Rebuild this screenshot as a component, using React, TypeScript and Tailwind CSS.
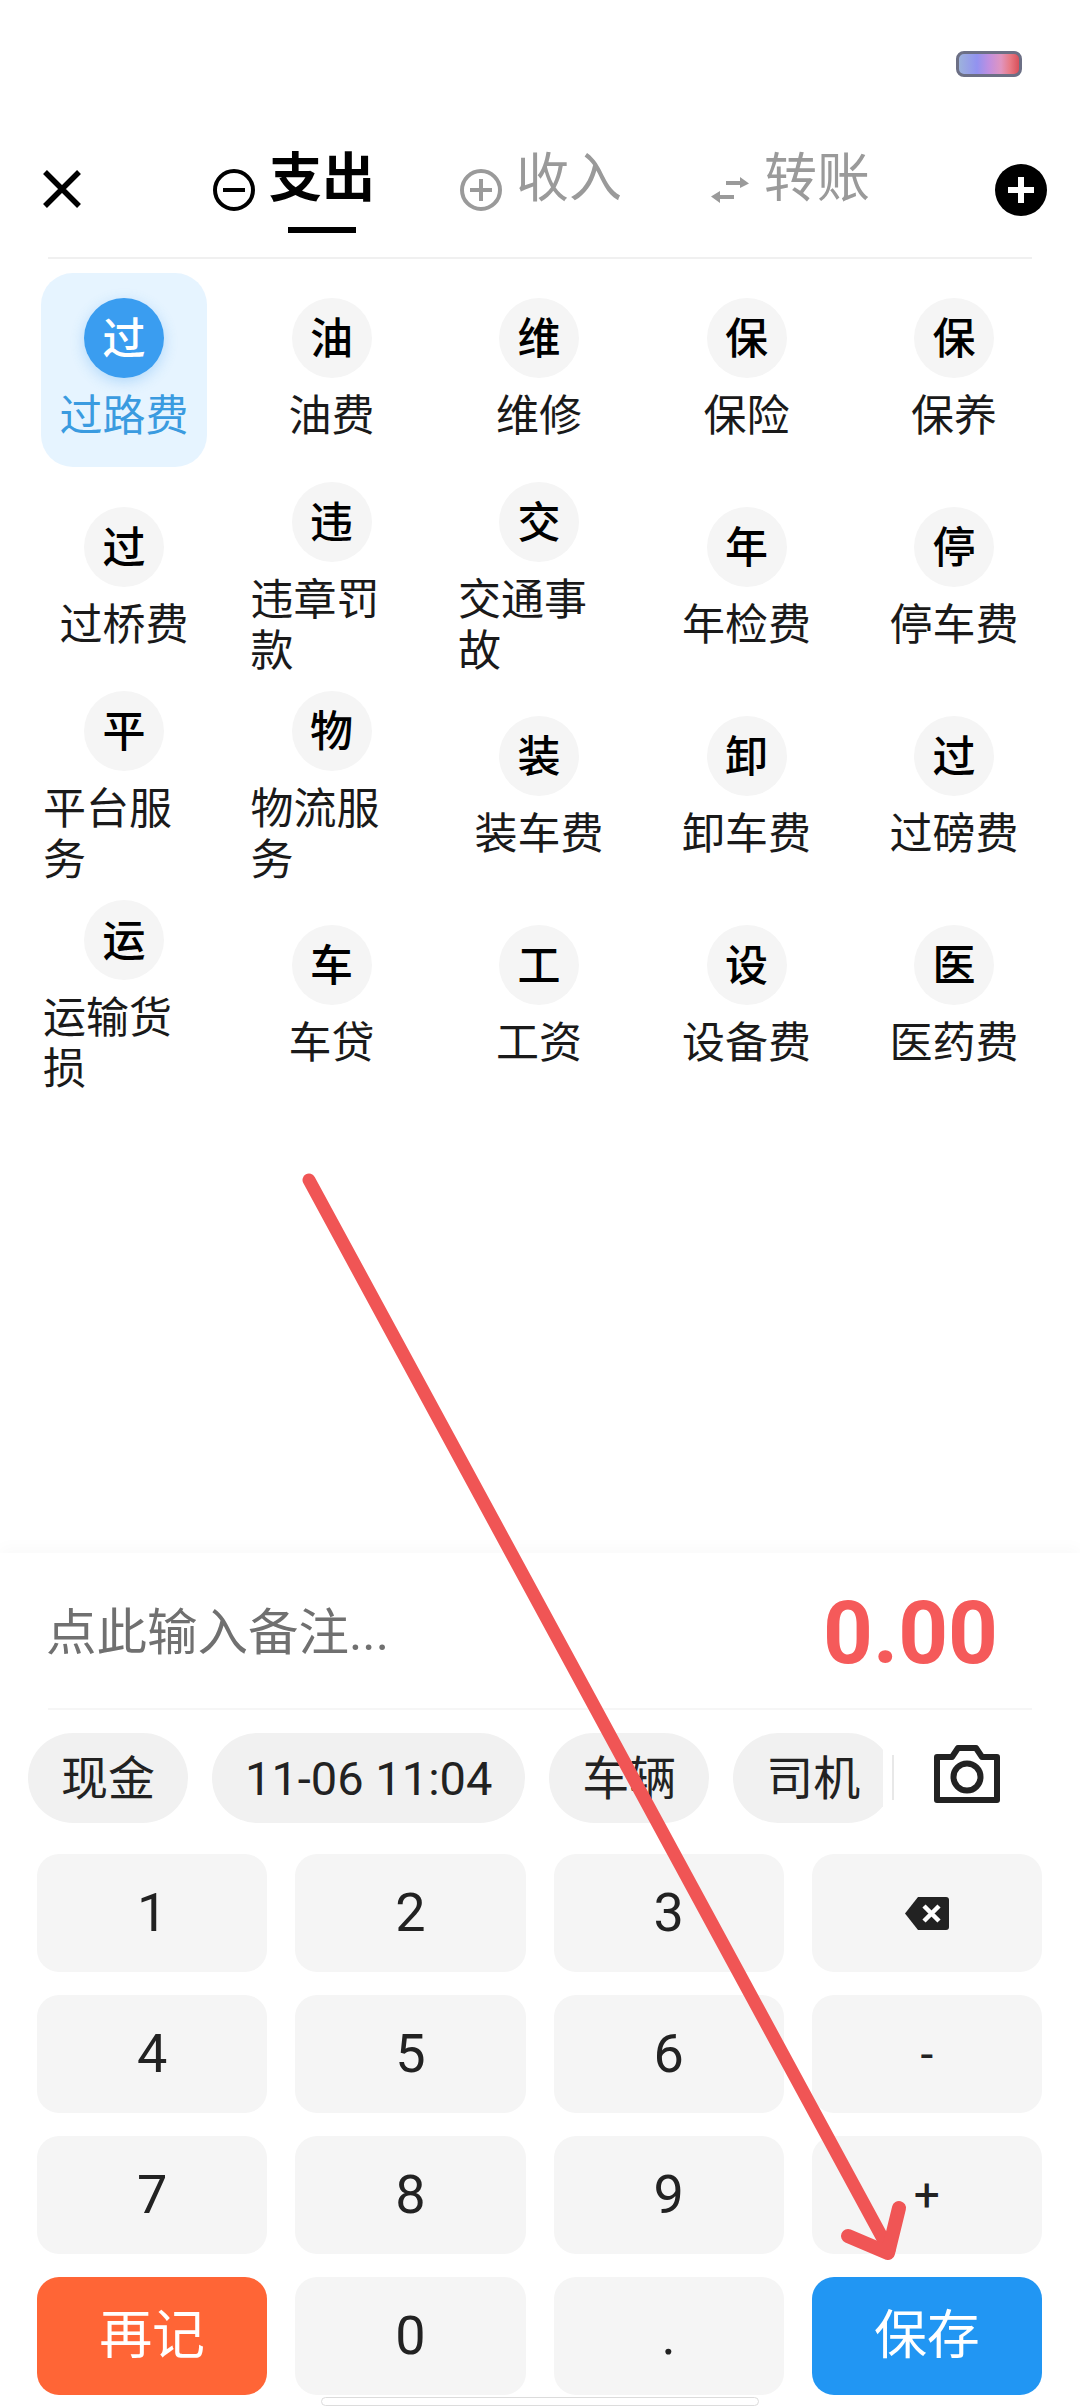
import React from "react";

const cjk = "font-['Roboto','Noto_Sans_CJK_SC',sans-serif]";

type Item = { g: string; label: string; active?: boolean };
const items: Item[] = [
  { g: "过", label: "过路费", active: true },
  { g: "油", label: "油费" },
  { g: "维", label: "维修" },
  { g: "保", label: "保险" },
  { g: "保", label: "保养" },
  { g: "过", label: "过桥费" },
  { g: "违", label: "违章罚款" },
  { g: "交", label: "交通事故" },
  { g: "年", label: "年检费" },
  { g: "停", label: "停车费" },
  { g: "平", label: "平台服务" },
  { g: "物", label: "物流服务" },
  { g: "装", label: "装车费" },
  { g: "卸", label: "卸车费" },
  { g: "过", label: "过磅费" },
  { g: "运", label: "运输货损" },
  { g: "车", label: "车贷" },
  { g: "工", label: "工资" },
  { g: "设", label: "设备费" },
  { g: "医", label: "医药费" },
];

function Category({ g, label, active }: Item) {
  return (
    <div
      className={
        "h-[194px] flex flex-col items-center justify-center rounded-[32px] " +
        (active ? "bg-[#e6f4ff]" : "")
      }
    >
      <div
        className={
          "w-[80px] h-[80px] shrink-0 rounded-full flex items-center justify-center pt-[3px] text-[43px] leading-none font-medium " +
          (active
            ? "bg-[#3a9df0] text-white shadow-[0_4px_14px_rgba(58,157,240,0.3)]"
            : "bg-[#f5f5f5] text-black")
        }
      >
        {g}
      </div>
      <div
        className={
          "mt-[13px] max-w-[162px] text-left text-[43px] leading-[51px] " +
          (active ? "text-[#3a9be0]" : "text-[#1a1a1a]")
        }
      >
        {label}
      </div>
    </div>
  );
}

function Key({ children, className }: { children: React.ReactNode; className?: string }) {
  return (
    <div
      className={
        "h-[118px] rounded-[22px] flex items-center justify-center " +
        (className ?? "bg-[#f5f5f5] text-[#222] text-[54px] leading-none")
      }
    >
      {children}
    </div>
  );
}

function Chip({ children }: { children: React.ReactNode }) {
  return (
    <div className="h-[90px] shrink-0 rounded-full bg-[#f1f1f1] px-[33px] flex items-center text-[47px] leading-none text-[#222]">
      {children}
    </div>
  );
}

export default function App() {
  return (
    <div className={"relative w-[1080px] h-[2408px] bg-white overflow-hidden flex flex-col " + cjk}>
      {/* status bar */}
      <div className="h-[150px] shrink-0 pt-[51px] pl-[956px]">
        <div className="w-[66px] h-[26px] rounded-[8px] border-[3px] border-[#6c6f85] bg-[linear-gradient(90deg,#9db2dc_0%,#9292f0_30%,#c08fe0_50%,#e095c0_70%,#e87a85_85%,#d9505a_100%)]" />
      </div>

      {/* header */}
      <div className="h-[107px] shrink-0 flex items-start pl-[43px]">
        <svg className="mt-[20px]" width="38" height="38" viewBox="0 0 38 38" fill="none" stroke="#000" strokeWidth="5.5">
          <path d="M2 2 L36 36 M36 2 L2 36" />
        </svg>

        <div className="ml-[132px] flex items-start">
          <svg className="mt-[19px]" width="42" height="42" viewBox="0 0 42 42" fill="none" stroke="#000" strokeWidth="4">
            <circle cx="21" cy="21" r="19" />
            <path d="M10 21 H32" />
          </svg>
          <div className="ml-[14px] w-[106px] flex flex-col items-center">
            <div className="text-[53px] leading-[53px] pt-[3px] font-bold text-black">支出</div>
            <div className="mt-[21px] w-[68px] h-[6px] bg-black" />
          </div>
        </div>

        <div className="ml-[85px] flex items-start">
          <svg className="mt-[19px]" width="42" height="42" viewBox="0 0 42 42" fill="none" stroke="#9a9a9a" strokeWidth="4">
            <circle cx="21" cy="21" r="19" />
            <path d="M10 21 H32 M21 10 V32" />
          </svg>
          <div className="ml-[14px] w-[106px] pt-[3px] text-[53px] leading-[53px] text-[#9a9a9a]">收入</div>
        </div>

        <div className="ml-[89px] flex items-start">
          <svg className="mt-[27px]" width="38" height="26" viewBox="0 0 38 26" fill="#9a9a9a">
            <path d="M15 4 H29 V0 L38 6.5 L29 11 V8 H15 Z" />
            <path d="M23 18 H9 V14 L0 19.5 L9 26 V22 H23 Z" />
          </svg>
          <div className="ml-[15px] w-[106px] pt-[3px] text-[53px] leading-[53px] text-[#9a9a9a]">转账</div>
        </div>

        <svg className="mt-[14px] ml-[125px]" width="52" height="52" viewBox="0 0 52 52">
          <circle cx="26" cy="26" r="26" fill="#000" />
          <path d="M13 26 H39 M26 13 V39" stroke="#fff" strokeWidth="6" />
        </svg>
      </div>
      <div className="h-[2px] shrink-0 mx-[48px] bg-[#f0f0f0]" />

      {/* categories */}
      <div className="flex-1 mt-[14px] pl-[41px] pr-[43px]">
        <div className="grid grid-cols-5 gap-x-[41.5px] gap-y-[15px]">
          {items.map((it, i) => (
            <Category key={i} {...it} />
          ))}
        </div>
      </div>

      {/* footer */}
      <div className="shrink-0 bg-white shadow-[0_-6px_14px_rgba(0,0,0,0.025)]">
        <div className="h-[155px] flex items-center justify-between pt-[5px] pl-[46px] pr-[82px]">
          <div className="text-[50.5px] leading-none text-[#707070]">点此输入备注...</div>
          <div className="text-[87px] leading-none font-bold text-[#f55a5a]">0.00</div>
        </div>
        <div className="h-[2px] mx-[48px] bg-[#f6f6f6]" />

        <div className="mt-[23px] flex items-start pl-[28px]">
          <div className="w-[855px] flex gap-[24px] overflow-hidden">
            <Chip>现金</Chip>
            <Chip>11-06 11:04</Chip>
            <Chip>车辆</Chip>
            <Chip>司机</Chip>
          </div>
          <div className="ml-[9px] mt-[22px] w-[2px] h-[45px] bg-[#e8e8e8]" />
          <svg className="ml-[40px] mt-[12px]" width="66" height="58" viewBox="0 0 66 58" fill="none" stroke="#222" strokeWidth="6" strokeLinejoin="round">
            <path d="M3 12 H18 L24 3 H42 L48 12 H63 V55 H3 Z" />
            <circle cx="33" cy="32" r="13.5" />
          </svg>
        </div>

        <div className="mt-[31px] pl-[37px] pr-[38px] grid grid-cols-4 gap-x-[28px] gap-y-[23px]">
          <Key>1</Key>
          <Key>2</Key>
          <Key>3</Key>
          <Key>
            <svg width="44" height="33" viewBox="0 0 44 33">
              <path d="M13 0 H41 Q44 0 44 3 V30 Q44 33 41 33 H13 L0 16.5 Z" fill="#222" />
              <path d="M19 9 L34 24 M34 9 L19 24" stroke="#fff" strokeWidth="4.5" />
            </svg>
          </Key>
          <Key>4</Key>
          <Key>5</Key>
          <Key>6</Key>
          <Key className="bg-[#f5f5f5] text-[#222] text-[46px] leading-none">-</Key>
          <Key>7</Key>
          <Key>8</Key>
          <Key>9</Key>
          <Key className="bg-[#f5f5f5] text-[#222] text-[46px] leading-none">+</Key>
          <Key className="bg-[#ff6536] text-white text-[53px] leading-none">再记</Key>
          <Key>0</Key>
          <Key>.</Key>
          <Key className="bg-[#2196f3] text-white text-[53px] leading-none">保存</Key>
        </div>

        <div className="mt-[2px] mb-[2px] mx-auto w-[438px] h-[9px] rounded-full bg-white border border-[#dcdcdc]" />
      </div>

      {/* annotation arrow drawn over the page */}
      <svg className="absolute inset-0 pointer-events-none" width="1080" height="2408" viewBox="0 0 1080 2408" fill="none">
        <path d="M309 1180 L889 2250" stroke="#f05555" strokeWidth="13" strokeLinecap="round" />
        <path d="M899 2208 L888 2253 L848 2236" stroke="#f05555" strokeWidth="14" strokeLinecap="round" strokeLinejoin="round" />
      </svg>
    </div>
  );
}
